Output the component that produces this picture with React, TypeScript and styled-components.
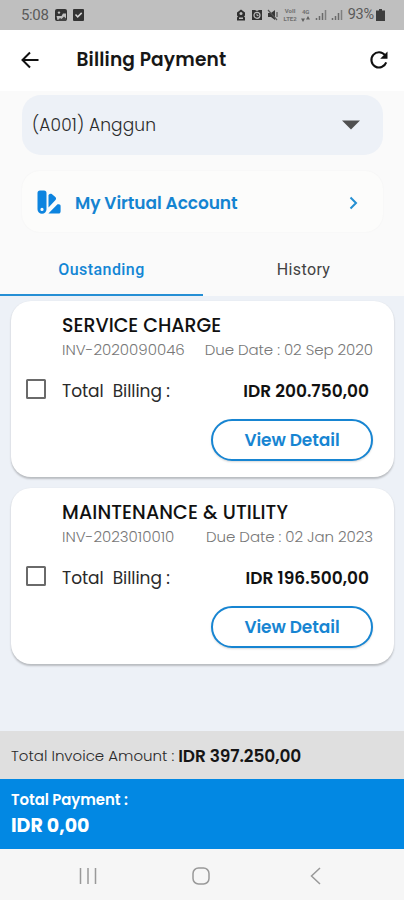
import React from 'react';
import styled, { createGlobalStyle } from 'styled-components';

const Global = createGlobalStyle`
  *{box-sizing:border-box}
  body{margin:0;background:#edf1f7;font-family:Poppins,Inter,"Open Sans",sans-serif;color:#1c1c1c}
  button{font-family:inherit;cursor:pointer}
`;
const Screen = styled.div`width:404px;height:900px;display:flex;flex-direction:column;overflow:hidden;background:#edf1f7;`;
const Label = styled.span<{ $size: number; $weight?: number; $track?: number; $color?: string }>`
  font-size:${p => p.$size}px;
  font-weight:${p => p.$weight ?? 400};
  letter-spacing:${p => p.$track ?? 0}px;
  color:${p => p.$color ?? '#2a2a2a'};
  line-height:20px;
  white-space:pre;
`;
const StatusBar = styled.div`height:30px;flex:none;background:#bfbfbf;display:flex;align-items:center;justify-content:space-between;padding:0 19px 0 21px;`;
const StatusGroup = styled.div<{ $gap: number }>`display:flex;align-items:center;gap:${p => p.$gap}px;svg{display:block}`;
const TinyStack = styled.div`display:flex;flex-direction:column;align-items:center;font:700 6px/8px Roboto,sans-serif;color:#707070;`;
const StatusText = styled.span<{ $size: number; $track: number }>`font:400 ${p => p.$size}px/20px Roboto,sans-serif;letter-spacing:${p => p.$track}px;color:#5a5a5a;`;
const Header = styled.header`height:61px;flex:none;background:#fff;display:flex;align-items:center;padding:0 15px 2px 20px;svg{display:block}`;
const Title = styled.h1`margin:0 auto 0 36.5px;font-size:18.6px;font-weight:600;line-height:24px;letter-spacing:.15px;color:#171717;`;
const Top = styled.section`height:205px;flex:none;background:#fafafa;padding-top:4px;display:flex;flex-direction:column;`;
const Select = styled.div`height:60px;margin:0 21px 0 22px;border-radius:19px;background:#edf1f7;display:flex;align-items:center;justify-content:space-between;padding:0 23px 1px 10px;`;
const Account = styled.div`height:61px;margin:16px 21px 0 22px;border-radius:18px;background:#fcfcfb;box-shadow:0 0 2px rgba(0,0,0,.045);display:flex;align-items:center;padding:2px 25px 0 15px;
  > span{margin:0 auto 0 14px}
  > svg:first-child{margin-bottom:2px}`;
const Tabs = styled.div`flex:1;display:grid;grid-template-columns:203px 201px;`;
const Tab = styled.div<{ $active?: boolean }>`display:flex;justify-content:center;padding-top:28px;border-bottom:${p => (p.$active ? '2.5px solid #258fd5' : '0')};
  font:500 16px/20px Roboto,sans-serif;letter-spacing:${p => (p.$active ? .42 : .38)}px;color:${p => (p.$active ? '#1286d5' : '#424242')};font-weight:${p => (p.$active ? 500 : 400)};`;
const List = styled.main`flex:1;padding:5px 10px 0 11px;display:flex;flex-direction:column;gap:11px;`;
const Card = styled.article`height:176px;border-radius:20px;background:#fff;box-shadow:0 1.5px 2px rgba(0,0,0,.22);display:grid;grid-template-columns:51px 1fr;`;
const CheckColumn = styled.div`padding:78px 0 0 15px;`;
const CheckBox = styled.div`width:20px;height:20px;border:2px solid #6a6a6a;border-radius:1.5px;`;
const CardBody = styled.div`padding:15px 21px 0 0;display:flex;flex-direction:column;`;
const Row = styled.div<{ $top: number; $right?: number }>`display:flex;justify-content:space-between;margin-top:${p => p.$top}px;padding-right:${p => p.$right ?? 0}px;`;
const DetailButton = styled.button`width:162px;height:42px;margin:18px 0 0;align-self:flex-end;border:2px solid #1785d2;border-radius:21px;background:#fff;padding:2px 0 0;box-shadow:0 1px 2px rgba(0,0,0,.15);`;
const Invoice = styled.div`height:48px;flex:none;background:#dfdfdf;display:flex;align-items:center;gap:4px;padding:1px 11px 0;`;
const Payment = styled.div`height:70px;flex:none;background:#0288e3;padding:11px 11px;display:flex;flex-direction:column;gap:6px;`;
const Nav = styled.nav`height:51px;flex:none;background:#f6f6f6;display:flex;align-items:center;gap:95px;padding:2px 0 0 79px;svg{display:block}svg:last-child{margin-left:5px}`;

const bills = [
  { name: 'SERVICE CHARGE', nameTrack: 0, id: 'INV-2020090046', due: 'Due Date : 02 Sep 2020', total: 'IDR 200.750,00' },
  { name: 'MAINTENANCE & UTILITY', nameTrack: 0.12, id: 'INV-2023010010', due: 'Due Date : 02 Jan 2023', total: 'IDR 196.500,00' },
];

function SignalIcon() {
  return <svg width="12" height="12" viewBox="0 0 12 12" stroke="#6a6a6a" strokeWidth="1.5"><path d="M1.5 9v2M4.5 7v4M7.5 4v7" /><path d="M10.5 1v10" opacity=".75" /></svg>;
}

function StatusIcons() {
  return (
    <>
      <svg width="10" height="12" viewBox="0 0 10 12"><path d="M1 3.500 5 .5l4 3v3l-1 1 1 1v3H1v-3l1-1-1-1Z" fill="#2f2f2f" /><circle cx="5" cy="4.6" r="1.5" fill="#bfbfbf" /><path d="M3 8.5h4v1.500H3Z" fill="#bfbfbf" /></svg>
      <svg width="12" height="12" viewBox="0 0 12 12"><path d="M1 1h3l2 1 2-1h3v10H1Z" fill="#333" /><circle cx="6" cy="6.3" r="3" fill="none" stroke="#bfbfbf" strokeWidth="1.2" /><path d="M6 4.8v1.8h1.5" stroke="#bfbfbf" fill="none" /></svg>
      <svg width="12" height="12" viewBox="0 0 12 12"><path d="M1 4h3l4-3v10L4 8H1Z" fill="#383838" /><path d="m1 1 9 10M10 3v5" stroke="#555" strokeWidth="1.2" /></svg>
    </>
  );
}

export default function App() {
  return (
    <>
      <Global />
      <Screen>
        <StatusBar>
          <StatusGroup $gap={6}>
            <StatusText $size={15} $track={-.35}>5:08</StatusText>
            <svg width="12" height="12" viewBox="0 0 12 12"><rect width="12" height="12" rx="2" fill="#333" /><path d="M1.5 7h5L8 4.500h3V10a1 1 0 0 1-1 1H2.500Z" fill="#bfbfbf" /><path d="m3 11 2-2 1.500 1L9 7.500l2 2V12H3Z" fill="#444" /><circle cx="4" cy="3.6" r="1.2" fill="#bfbfbf" /></svg>
            <svg width="11" height="12" viewBox="0 0 11 12"><rect width="11" height="12" rx="1" fill="#333" /><path d="m2.500 5.500 2.200 2.400 4-4" fill="none" stroke="#d5d5d5" strokeWidth="1.500" /></svg>
          </StatusGroup>
          <StatusGroup $gap={4.5}>
            <StatusIcons />
            <TinyStack><span>VoII</span><span>LTE2</span></TinyStack>
            <TinyStack><span>4G</span><svg width="9" height="6" viewBox="0 0 9 6" fill="#606060"><path d="M0 2.500h4L2 6ZM5 3.500h4L7 0Z" /></svg></TinyStack>
            <SignalIcon />
            <SignalIcon />
            <StatusGroup $gap={2}>
              <StatusText $size={14.5} $track={-.2}>93%</StatusText>
              <svg width="9" height="12" viewBox="0 0 9 12"><path d="M3 0h3v1.500h3V12H0V1.500h3Z" fill="#3d3d3d" /></svg>
            </StatusGroup>
          </StatusGroup>
        </StatusBar>
        <Header>
          <svg width="20" height="20" viewBox="0 0 20 20" fill="none" stroke="#111" strokeWidth="2"><path d="M18.500 10H3M10 2.500 2.500 10l7.500 7.500" /></svg>
          <Title>Billing Payment</Title>
          <svg width="20" height="20" viewBox="0 0 20 20"><path d="M16 5.200A7.600 7.600 0 1 0 17.200 12.400" fill="none" stroke="#111" strokeWidth="2.100" /><path d="M18.500 1.500v7.300h-7.300Z" fill="#111" /></svg>
        </Header>
        <Top>
          <Select>
            <Label $size={17} $weight={300} $track={.15}>(A001) Anggun</Label>
            <svg width="18" height="10" viewBox="0 0 18 10"><path d="M0 .5h18L9 9.500Z" fill="#505050" /></svg>
          </Select>
          <Account>
            <svg width="24" height="24" viewBox="0 0 24 24" fill="#0d84df">
              <path fillRule="evenodd" d="M3 .5h4a2.500 2.500 0 0 1 2.500 2.500v16.300a4.500 4.500 0 0 1-9 0V3A2.500 2.500 0 0 1 3 .5Zm2 17.300a1.600 1.600 0 1 0 0 3.200 1.600 1.600 0 0 0 0-3.200Z" />
              <path d="M11.500 5c1.200-1.400 2.200-1.700 3.300-.9l3.500 2.900c1 .9 1 2 .2 3l-7 7.500ZM20.500 14.300h1.200c1.400 0 1.900.7 1.900 1.900v5c0 1.500-.8 2.300-2.200 2.300h-10Z" />
            </svg>
            <Label $size={17} $weight={600} $track={-.08} $color="#1584d1">My Virtual Account</Label>
            <svg width="9" height="14" viewBox="0 0 9 14"><path d="m1.500 1.500 5.500 5.500-5.500 5.500" fill="none" stroke="#258fd2" strokeWidth="2" /></svg>
          </Account>
          <Tabs><Tab $active>Oustanding</Tab><Tab>History</Tab></Tabs>
        </Top>
        <List>
          {bills.map(b => (
            <Card key={b.id}>
              <CheckColumn><CheckBox /></CheckColumn>
              <CardBody>
                <Label $size={19} $weight={500} $color="#111" $track={b.nameTrack}>{b.name}</Label>
                <Row $top={4}>
                  <Label $size={15} $weight={300} $color="#777" $track={0}>{b.id}</Label>
                  <Label $size={15} $weight={300} $color="#777" $track={-.06}>{b.due}</Label>
                </Row>
                <Row $top={21} $right={4}>
                  <Label $size={17} $track={-.05}>Total  Billing :</Label>
                  <Label $size={17} $weight={600} $color="#111" $track={.02}>{b.total}</Label>
                </Row>
                <DetailButton><Label $size={17} $weight={600} $track={-.08} $color="#1785d2">View Detail</Label></DetailButton>
              </CardBody>
            </Card>
          ))}
        </List>
        <Invoice>
          <Label $size={15} $weight={300}>Total Invoice Amount :</Label>
          <Label $size={17} $weight={600} $color="#151515" $track={-.1}>IDR 397.250,00</Label>
        </Invoice>
        <Payment>
          <Label $size={14.9} $weight={600} $track={-.06} $color="#fff">Total Payment :</Label>
          <Label $size={19} $weight={700} $color="#fff">IDR 0,00</Label>
        </Payment>
        <Nav>
          <svg width="18" height="18" viewBox="0 0 18 18" stroke="#999" strokeWidth="1.500"><path d="M1.500 1v16M9 1v16M16.500 1v16" /></svg>
          <svg width="18" height="18" viewBox="0 0 18 18"><rect x="1" y="1" width="16" height="16" rx="5.500" fill="none" stroke="#999" strokeWidth="1.500" /></svg>
          <svg width="11" height="18" viewBox="0 0 11 18"><path d="M10 1 1.500 9l8.500 8" fill="none" stroke="#999" strokeWidth="1.500" /></svg>
        </Nav>
      </Screen>
    </>
  );
}
